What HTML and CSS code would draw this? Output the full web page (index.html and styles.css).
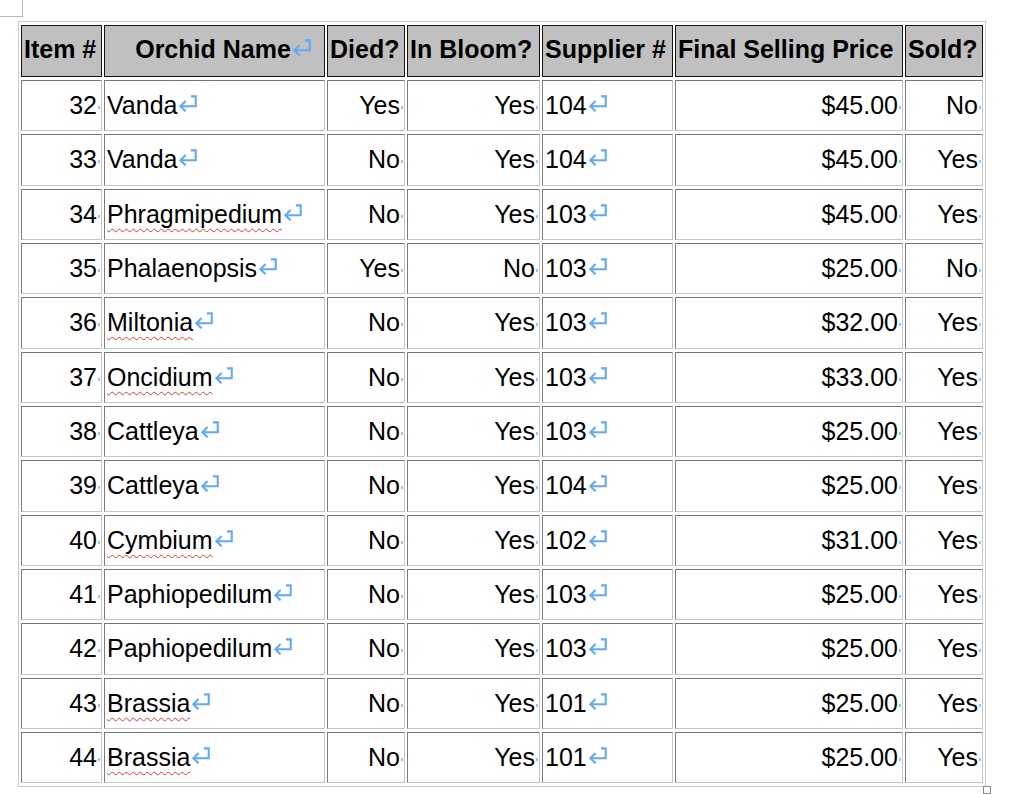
FILE: index.html
```html
<!DOCTYPE html>
<html lang="en">
<head>
<meta charset="utf-8">
<title>Orchids</title>
<link rel="stylesheet" href="styles.css">
</head>
<body>
<div class="page">
  <div class="corner"></div>
  <table class="orchids">
    <thead>
      <tr class="head">
        <th class="c1">Item #<span class="m"></span></th>
        <th class="c2 center">Orchid Name<svg class="ret" viewBox="0 0 18 16"><path d="M12.3 1.2H16.8V10.6H2.4M7.2 5.6L2.2 10.6L7.2 15.4"/></svg></th>
        <th class="c3">Died?<span class="m"></span></th>
        <th class="c4">In Bloom?<span class="m"></span></th>
        <th class="c5">Supplier #<span class="m"></span></th>
        <th class="c6">Final Selling Price<span class="m"></span></th>
        <th class="c7">Sold?<span class="m"></span></th>
      </tr>
    </thead>
    <tbody>
      <tr class="row"><td class="r">32<span class="m"></span></td><td class="l">Vanda<svg class="ret" viewBox="0 0 18 16"><path d="M12.3 1.2H16.8V10.6H2.4M7.2 5.6L2.2 10.6L7.2 15.4"/></svg></td><td class="r">Yes<span class="m"></span></td><td class="r">Yes<span class="m"></span></td><td class="l">104<svg class="ret" viewBox="0 0 18 16"><path d="M12.3 1.2H16.8V10.6H2.4M7.2 5.6L2.2 10.6L7.2 15.4"/></svg></td><td class="r">$45.00<span class="m"></span></td><td class="r">No<span class="m"></span></td></tr>
      <tr class="row"><td class="r">33<span class="m"></span></td><td class="l">Vanda<svg class="ret" viewBox="0 0 18 16"><path d="M12.3 1.2H16.8V10.6H2.4M7.2 5.6L2.2 10.6L7.2 15.4"/></svg></td><td class="r">No<span class="m"></span></td><td class="r">Yes<span class="m"></span></td><td class="l">104<svg class="ret" viewBox="0 0 18 16"><path d="M12.3 1.2H16.8V10.6H2.4M7.2 5.6L2.2 10.6L7.2 15.4"/></svg></td><td class="r">$45.00<span class="m"></span></td><td class="r">Yes<span class="m"></span></td></tr>
      <tr class="row"><td class="r">34<span class="m"></span></td><td class="l"><span class="sp">Phragmipedium</span><svg class="ret" viewBox="0 0 18 16"><path d="M12.3 1.2H16.8V10.6H2.4M7.2 5.6L2.2 10.6L7.2 15.4"/></svg></td><td class="r">No<span class="m"></span></td><td class="r">Yes<span class="m"></span></td><td class="l">103<svg class="ret" viewBox="0 0 18 16"><path d="M12.3 1.2H16.8V10.6H2.4M7.2 5.6L2.2 10.6L7.2 15.4"/></svg></td><td class="r">$45.00<span class="m"></span></td><td class="r">Yes<span class="m"></span></td></tr>
      <tr class="row"><td class="r">35<span class="m"></span></td><td class="l">Phalaenopsis<svg class="ret" viewBox="0 0 18 16"><path d="M12.3 1.2H16.8V10.6H2.4M7.2 5.6L2.2 10.6L7.2 15.4"/></svg></td><td class="r">Yes<span class="m"></span></td><td class="r">No<span class="m"></span></td><td class="l">103<svg class="ret" viewBox="0 0 18 16"><path d="M12.3 1.2H16.8V10.6H2.4M7.2 5.6L2.2 10.6L7.2 15.4"/></svg></td><td class="r">$25.00<span class="m"></span></td><td class="r">No<span class="m"></span></td></tr>
      <tr class="row"><td class="r">36<span class="m"></span></td><td class="l"><span class="sp">Miltonia</span><svg class="ret" viewBox="0 0 18 16"><path d="M12.3 1.2H16.8V10.6H2.4M7.2 5.6L2.2 10.6L7.2 15.4"/></svg></td><td class="r">No<span class="m"></span></td><td class="r">Yes<span class="m"></span></td><td class="l">103<svg class="ret" viewBox="0 0 18 16"><path d="M12.3 1.2H16.8V10.6H2.4M7.2 5.6L2.2 10.6L7.2 15.4"/></svg></td><td class="r">$32.00<span class="m"></span></td><td class="r">Yes<span class="m"></span></td></tr>
      <tr class="row"><td class="r">37<span class="m"></span></td><td class="l"><span class="sp">Oncidium</span><svg class="ret" viewBox="0 0 18 16"><path d="M12.3 1.2H16.8V10.6H2.4M7.2 5.6L2.2 10.6L7.2 15.4"/></svg></td><td class="r">No<span class="m"></span></td><td class="r">Yes<span class="m"></span></td><td class="l">103<svg class="ret" viewBox="0 0 18 16"><path d="M12.3 1.2H16.8V10.6H2.4M7.2 5.6L2.2 10.6L7.2 15.4"/></svg></td><td class="r">$33.00<span class="m"></span></td><td class="r">Yes<span class="m"></span></td></tr>
      <tr class="row"><td class="r">38<span class="m"></span></td><td class="l">Cattleya<svg class="ret" viewBox="0 0 18 16"><path d="M12.3 1.2H16.8V10.6H2.4M7.2 5.6L2.2 10.6L7.2 15.4"/></svg></td><td class="r">No<span class="m"></span></td><td class="r">Yes<span class="m"></span></td><td class="l">103<svg class="ret" viewBox="0 0 18 16"><path d="M12.3 1.2H16.8V10.6H2.4M7.2 5.6L2.2 10.6L7.2 15.4"/></svg></td><td class="r">$25.00<span class="m"></span></td><td class="r">Yes<span class="m"></span></td></tr>
      <tr class="row"><td class="r">39<span class="m"></span></td><td class="l">Cattleya<svg class="ret" viewBox="0 0 18 16"><path d="M12.3 1.2H16.8V10.6H2.4M7.2 5.6L2.2 10.6L7.2 15.4"/></svg></td><td class="r">No<span class="m"></span></td><td class="r">Yes<span class="m"></span></td><td class="l">104<svg class="ret" viewBox="0 0 18 16"><path d="M12.3 1.2H16.8V10.6H2.4M7.2 5.6L2.2 10.6L7.2 15.4"/></svg></td><td class="r">$25.00<span class="m"></span></td><td class="r">Yes<span class="m"></span></td></tr>
      <tr class="row"><td class="r">40<span class="m"></span></td><td class="l"><span class="sp">Cymbium</span><svg class="ret" viewBox="0 0 18 16"><path d="M12.3 1.2H16.8V10.6H2.4M7.2 5.6L2.2 10.6L7.2 15.4"/></svg></td><td class="r">No<span class="m"></span></td><td class="r">Yes<span class="m"></span></td><td class="l">102<svg class="ret" viewBox="0 0 18 16"><path d="M12.3 1.2H16.8V10.6H2.4M7.2 5.6L2.2 10.6L7.2 15.4"/></svg></td><td class="r">$31.00<span class="m"></span></td><td class="r">Yes<span class="m"></span></td></tr>
      <tr class="row"><td class="r">41<span class="m"></span></td><td class="l">Paphiopedilum<svg class="ret" viewBox="0 0 18 16"><path d="M12.3 1.2H16.8V10.6H2.4M7.2 5.6L2.2 10.6L7.2 15.4"/></svg></td><td class="r">No<span class="m"></span></td><td class="r">Yes<span class="m"></span></td><td class="l">103<svg class="ret" viewBox="0 0 18 16"><path d="M12.3 1.2H16.8V10.6H2.4M7.2 5.6L2.2 10.6L7.2 15.4"/></svg></td><td class="r">$25.00<span class="m"></span></td><td class="r">Yes<span class="m"></span></td></tr>
      <tr class="row"><td class="r">42<span class="m"></span></td><td class="l">Paphiopedilum<svg class="ret" viewBox="0 0 18 16"><path d="M12.3 1.2H16.8V10.6H2.4M7.2 5.6L2.2 10.6L7.2 15.4"/></svg></td><td class="r">No<span class="m"></span></td><td class="r">Yes<span class="m"></span></td><td class="l">103<svg class="ret" viewBox="0 0 18 16"><path d="M12.3 1.2H16.8V10.6H2.4M7.2 5.6L2.2 10.6L7.2 15.4"/></svg></td><td class="r">$25.00<span class="m"></span></td><td class="r">Yes<span class="m"></span></td></tr>
      <tr class="row"><td class="r">43<span class="m"></span></td><td class="l"><span class="sp">Brassia</span><svg class="ret" viewBox="0 0 18 16"><path d="M12.3 1.2H16.8V10.6H2.4M7.2 5.6L2.2 10.6L7.2 15.4"/></svg></td><td class="r">No<span class="m"></span></td><td class="r">Yes<span class="m"></span></td><td class="l">101<svg class="ret" viewBox="0 0 18 16"><path d="M12.3 1.2H16.8V10.6H2.4M7.2 5.6L2.2 10.6L7.2 15.4"/></svg></td><td class="r">$25.00<span class="m"></span></td><td class="r">Yes<span class="m"></span></td></tr>
      <tr class="row"><td class="r">44<span class="m"></span></td><td class="l"><span class="sp">Brassia</span><svg class="ret" viewBox="0 0 18 16"><path d="M12.3 1.2H16.8V10.6H2.4M7.2 5.6L2.2 10.6L7.2 15.4"/></svg></td><td class="r">No<span class="m"></span></td><td class="r">Yes<span class="m"></span></td><td class="l">101<svg class="ret" viewBox="0 0 18 16"><path d="M12.3 1.2H16.8V10.6H2.4M7.2 5.6L2.2 10.6L7.2 15.4"/></svg></td><td class="r">$25.00<span class="m"></span></td><td class="r">Yes<span class="m"></span></td></tr>
    </tbody>
  </table>
  <div class="handle"></div>
</div>
</body>
</html>
```

FILE: styles.css
```css
html, body {
  margin: 0;
  padding: 0;
  background: #ffffff;
}

.page {
  font-family: "Liberation Sans", Arial, sans-serif;
  color: #000;
}

.corner {
  width: 22px;
  height: 16px;
  border-right: 1px solid #b9b9b9;
  border-bottom: 1px solid #b9b9b9;
}

.orchids {
  margin: 4px 0 0 18px;
  border: 1px solid #cacaca;
  border-collapse: separate;
  border-spacing: 2px 3px;
  font-size: 25px;
}

.orchids th,
.orchids td {
  box-sizing: border-box;
  padding: 0 1px 0 2px;
  vertical-align: middle;
  white-space: nowrap;
  line-height: 29px;
}

.orchids th {
  background: #c0c0c0;
  border: 1px solid #151515;
  font-weight: bold;
  text-align: left;
  padding-bottom: 4px;
}

.orchids td {
  border-top: 1px solid #767676;
  border-left: 1px solid #7c7c7c;
  border-bottom: 1px solid #c6c6c6;
  border-right: 1px solid #c6c6c6;
}

.head { height: 52px; }
.row { height: 51.33px; }

.c1 { width: 81px; }
.c2 { width: 221px; }
.c3 { width: 78px; }
.c4 { width: 133px; }
.c5 { width: 131px; }
.c6 { width: 228px; }
.c7 { width: 78px; }

.orchids th.center {
  text-align: center;
  padding-left: 18px;
}

.orchids td.r { text-align: right; }
.orchids td.l { text-align: left; padding-left: 2px; }

.m {
  display: inline-block;
  width: 2px;
  height: 3px;
  margin-left: 1px;
  background: #9cc6ef;
  vertical-align: middle;
}

.ret {
  display: inline-block;
  width: 19px;
  height: 17px;
  margin-left: 1px;
  vertical-align: 2px;
  fill: none;
  stroke: #62a9f6;
  stroke-width: 2;
  stroke-linecap: butt;
  stroke-linejoin: miter;
}

.sp {
  text-decoration-line: underline;
  text-decoration-style: wavy;
  text-decoration-color: #e8392e;
  text-decoration-thickness: 1px;
  text-underline-offset: 5px;
}

.handle {
  width: 6px;
  height: 6px;
  margin: -1px 0 0 983px;
  border: 1px solid #8a8a8a;
  background: #fff;
}
```
